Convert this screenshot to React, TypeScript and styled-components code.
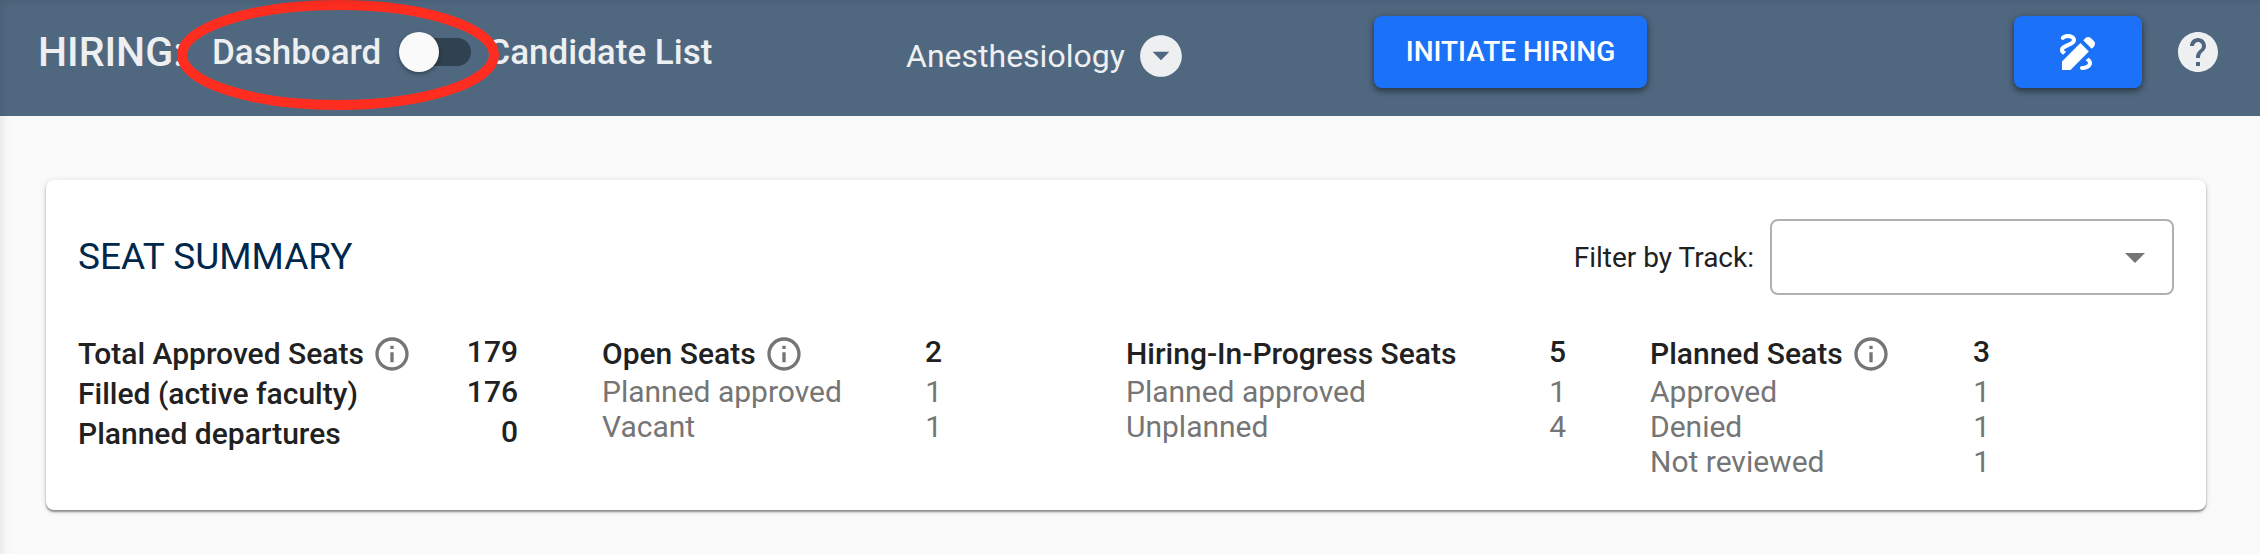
import React, { useState } from 'react';
import styled, { createGlobalStyle } from 'styled-components';
import {
  MdArrowDropDown,
  MdArrowDropDownCircle,
  MdDraw,
  MdHelp,
  MdInfoOutline,
} from 'react-icons/md';

const GlobalStyle = createGlobalStyle`
  *, *::before, *::after { box-sizing: border-box; }
  body {
    margin: 0;
    background: #fafafa;
    color: #212121;
    font-family: Roboto, "Liberation Sans", sans-serif;
  }
`;

const Page = styled.div`
  position: relative;
  min-height: 100vh;
  background: #fafafa;

  &::after {
    content: '';
    position: absolute;
    inset: 0;
    pointer-events: none;
    box-shadow: inset 6px 6px 12px -6px rgba(0, 0, 0, 0.12);
  }
`;

const TopBar = styled.header`
  display: grid;
  grid-template-columns: 868fr 468fr 640fr auto;
  align-items: start;
  height: 116px;
  padding: 16px 38px 0;
  background: #4f6880;
  color: #eeeff1;
`;

const TitleGroup = styled.div`
  display: flex;
  align-items: center;
  white-space: nowrap;
`;

const PageTitle = styled.h1`
  margin: 0 28px 0 0;
  font-size: 41px;
  line-height: 70px;
  font-weight: 500;
`;

const ViewToggle = styled.label`
  position: relative;
  display: flex;
  align-items: center;
  height: 72px;
  font-size: 35px;
  font-weight: 500;
`;

const Switch = styled.input`
  appearance: none;
  position: relative;
  width: 68px;
  height: 28px;
  margin: 0 16px 0 22px;
  border-radius: 14px;
  background: #30414f;
  cursor: pointer;

  &::before {
    content: '';
    position: absolute;
    left: -4px;
    top: -6px;
    width: 40px;
    height: 40px;
    border-radius: 50%;
    background: #fafafa;
    box-shadow: 0 2px 4px rgba(0, 0, 0, 0.35);
  }

  &:checked::before {
    left: 32px;
  }
`;

const Highlight = styled.svg`
  position: absolute;
  left: -36px;
  top: -16px;
  width: 324px;
  height: 110px;
  pointer-events: none;
`;

const DepartmentPicker = styled.div`
  position: relative;
  justify-self: start;
  display: flex;
  align-items: center;
  height: 80px;

  svg {
    position: absolute;
    right: 0;
    pointer-events: none;
  }
`;

const DepartmentSelect = styled.select`
  appearance: none;
  width: 280px;
  height: 50px;
  padding: 0 50px 0 0;
  border: 0;
  background: transparent;
  color: inherit;
  font: 400 32px/48px Roboto, "Liberation Sans", sans-serif;
`;

const PrimaryButton = styled.button<{ $width: number }>`
  display: flex;
  align-items: center;
  justify-content: center;
  width: ${(p) => p.$width}px;
  height: 72px;
  padding: 0;
  border: 0;
  border-radius: 8px;
  background: #1b72f8;
  box-shadow: 0 3px 6px rgba(0, 0, 0, 0.42), 0 1px 8px rgba(0, 0, 0, 0.16);
  color: #fff;
  font: 500 28px/32px Roboto, "Liberation Sans", sans-serif;
  white-space: nowrap;
  cursor: pointer;
`;

const Actions = styled.div`
  display: flex;
  align-items: center;
  gap: 32px;
`;

const HelpButton = styled.button`
  display: flex;
  padding: 0;
  border: 0;
  background: none;
  color: inherit;
  cursor: pointer;
`;

const Card = styled.section`
  margin: 64px 54px 43px 46px;
  padding: 39px 32px 31px;
  border-radius: 8px;
  background: #fff;
  box-shadow: 0 2px 2px rgba(0, 10, 5, 0.4), 0 1px 6px rgba(0, 0, 0, 0.14);
`;

const CardHeader = styled.div`
  display: flex;
  align-items: center;
  justify-content: space-between;
`;

const CardTitle = styled.h2`
  margin: 0;
  color: #00274c;
  font-size: 37px;
  line-height: 76px;
  font-weight: 400;
`;

const Filter = styled.div`
  position: relative;
  display: flex;
  align-items: center;
  gap: 16px;
  font-size: 28px;

  svg {
    position: absolute;
    right: 15px;
    color: #757575;
    pointer-events: none;
  }
`;

const TrackSelect = styled.select`
  appearance: none;
  width: 404px;
  height: 76px;
  padding: 0 64px 0 24px;
  border: 2px solid #b0b0b0;
  border-radius: 8px;
  background: #fff;
  font: inherit;
`;

const Groups = styled.div`
  display: grid;
  grid-template-columns: repeat(4, 1fr);
  align-items: start;
  margin-top: 39px;
`;

const GroupTable = styled.table<{ $width: number }>`
  width: ${(p) => p.$width}px;
  border-collapse: collapse;
  font-size: 30px;
`;

const Row = styled.tr<{ $strong?: boolean }>`
  height: ${(p) => (p.$strong ? 40 : 35)}px;
  color: ${(p) => (p.$strong ? '#212121' : '#757575')};
  font-weight: ${(p) => (p.$strong ? 500 : 400)};
  line-height: ${(p) => (p.$strong ? 40 : 35)}px;
`;

const Label = styled.th`
  padding: 0;
  font-weight: inherit;
  text-align: left;
  vertical-align: top;
  white-space: nowrap;
`;

const LabelText = styled.span`
  display: flex;
  align-items: center;
  gap: 8px;

  svg {
    color: #757575;
  }
`;

const Value = styled.td`
  padding: 0;
  line-height: 35px;
  text-align: right;
  vertical-align: top;
`;

type SeatRow = { label: string; value: number; strong?: boolean; info?: boolean };
type SeatGroup = { width: number; rows: SeatRow[] };

const groups: SeatGroup[] = [
  {
    width: 440,
    rows: [
      { label: 'Total Approved Seats', value: 179, strong: true, info: true },
      { label: 'Filled (active faculty)', value: 176, strong: true },
      { label: 'Planned departures', value: 0, strong: true },
    ],
  },
  {
    width: 340,
    rows: [
      { label: 'Open Seats', value: 2, strong: true, info: true },
      { label: 'Planned approved', value: 1 },
      { label: 'Vacant', value: 1 },
    ],
  },
  {
    width: 440,
    rows: [
      { label: 'Hiring-In-Progress Seats', value: 5, strong: true },
      { label: 'Planned approved', value: 1 },
      { label: 'Unplanned', value: 4 },
    ],
  },
  {
    width: 340,
    rows: [
      { label: 'Planned Seats', value: 3, strong: true, info: true },
      { label: 'Approved', value: 1 },
      { label: 'Denied', value: 1 },
      { label: 'Not reviewed', value: 1 },
    ],
  },
];

export default function App() {
  const [listView, setListView] = useState(false);

  return (
    <Page>
      <GlobalStyle />
      <TopBar>
        <TitleGroup>
          <PageTitle>HIRING:</PageTitle>
          <ViewToggle>
            Dashboard
            <Switch
              type="checkbox"
              role="switch"
              checked={listView}
              onChange={(e) => setListView(e.target.checked)}
            />
            Candidate List
            <Highlight viewBox="0 0 324 110" aria-hidden="true">
              <ellipse cx="162" cy="55" rx="156" ry="50" fill="none" stroke="#ff2d1f" strokeWidth="10" />
            </Highlight>
          </ViewToggle>
        </TitleGroup>
        <DepartmentPicker>
          <DepartmentSelect aria-label="Department">
            <option>Anesthesiology</option>
          </DepartmentSelect>
          <MdArrowDropDownCircle size={50} />
        </DepartmentPicker>
        <PrimaryButton type="button" $width={273}>INITIATE HIRING</PrimaryButton>
        <Actions>
          <PrimaryButton type="button" $width={128} aria-label="Draw">
            <MdDraw size={48} />
          </PrimaryButton>
          <HelpButton type="button" aria-label="Help">
            <MdHelp size={48} />
          </HelpButton>
        </Actions>
      </TopBar>
      <Card>
        <CardHeader>
          <CardTitle>SEAT SUMMARY</CardTitle>
          <Filter>
            <label htmlFor="track">Filter by Track:</label>
            <TrackSelect id="track">
              <option value="" />
            </TrackSelect>
            <MdArrowDropDown size={48} />
          </Filter>
        </CardHeader>
        <Groups>
          {groups.map((group) => (
            <GroupTable key={group.rows[0].label} $width={group.width}>
              <tbody>
                {group.rows.map((row) => (
                  <Row key={row.label} $strong={row.strong}>
                    <Label scope="row">
                      <LabelText>
                        {row.label}
                        {row.info && <MdInfoOutline size={40} />}
                      </LabelText>
                    </Label>
                    <Value>{row.value}</Value>
                  </Row>
                ))}
              </tbody>
            </GroupTable>
          ))}
        </Groups>
      </Card>
    </Page>
  );
}
